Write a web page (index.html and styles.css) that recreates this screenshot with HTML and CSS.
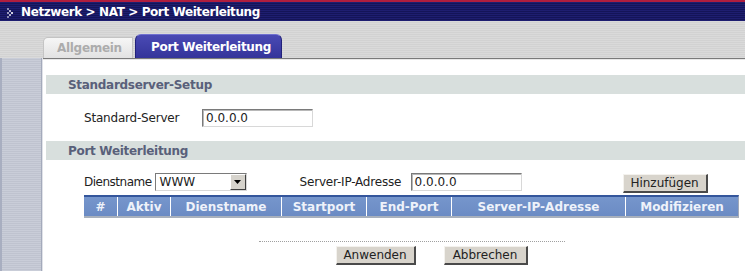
FILE: index.html
```html
<!DOCTYPE html>
<html lang="de">
<head>
<meta charset="utf-8">
<title>Port Weiterleitung</title>
<link rel="stylesheet" href="styles.css">
</head>
<body>
<div class="topbar">
  <svg class="crumb-icon" width="8" height="10" viewBox="0 0 8 10">
    <rect x="0" y="0" width="2" height="2" fill="#8a8ab0"/>
    <rect x="2" y="2" width="2" height="2" fill="#b0b0cc"/>
    <rect x="4" y="4" width="2" height="2" fill="#d0d0e0"/>
    <rect x="2" y="6" width="2" height="2" fill="#b0b0cc"/>
    <rect x="0" y="8" width="2" height="2" fill="#8a8ab0"/>
    <rect x="0" y="4" width="2" height="2" fill="#9a9abc"/>
  </svg>
  <span class="crumb">Netzwerk &gt; NAT &gt; Port Weiterleitung</span>
</div>
<div class="page">
  <div class="side">
    <div class="side-top"></div>
    <div class="side-rest"></div>
  </div>
  <div class="main">
    <div class="tabs">
      <div class="tab tab-off">Allgemein</div>
      <div class="tab tab-on">Port Weiterleitung</div>
    </div>
    <div class="content">
      <div class="band">Standardserver-Setup</div>
      <div class="row row-std">
        <span class="label label-std">Standard-Server</span>
        <span class="input input-std">0.0.0.0</span>
      </div>
      <div class="band">Port Weiterleitung</div>
      <div class="row row-pf">
        <span class="label label-dn">Dienstname</span>
        <span class="select"><span class="select-val">WWW</span><span class="select-btn"><svg width="7" height="4" viewBox="0 0 7 4"><path d="M0 0H7L3.5 4Z" fill="#000"/></svg></span></span>
        <span class="label label-ip">Server-IP-Adresse</span>
        <span class="input input-ip">0.0.0.0</span>
        <span class="btn btn-add">Hinzufügen</span>
      </div>
      <div class="table">
        <div class="th c1">#</div>
        <div class="th c2">Aktiv</div>
        <div class="th c3">Dienstname</div>
        <div class="th c4">Startport</div>
        <div class="th c5">End-Port</div>
        <div class="th c6">Server-IP-Adresse</div>
        <div class="th c7">Modifizieren</div>
      </div>
      <div class="footer">
        <div class="divider"></div>
        <div class="actions">
          <span class="btn btn-apply">Anwenden</span>
          <span class="btn btn-cancel">Abbrechen</span>
        </div>
      </div>
    </div>
  </div>
</div>
</body>
</html>
```
FILE: styles.css
```css
html, body {
  margin: 0;
  padding: 0;
  height: 100%;
  background: #fff;
  font-family: "DejaVu Sans", Verdana, sans-serif;
  font-size: 12px;
  color: #222;
  overflow: hidden;
}

.topbar {
  height: 19px;
  border-top: 2px solid #b01e3e;
  background: repeating-linear-gradient(to bottom, #1e1e70 0, #1e1e70 1px, #141458 1px, #141458 2px);
  display: flex;
  align-items: center;
  padding-left: 7px;
}
.crumb-icon {
  width: 8px;
  height: 10px;
  margin-right: 6px;
  margin-top: 2px;
}
.crumb {
  color: #fff;
  font-weight: bold;
  font-size: 12px;
  letter-spacing: -0.4px;
}

.page {
  display: flex;
  height: calc(100% - 21px);
}
.side {
  width: 43px;
  display: flex;
  flex-direction: column;
}
.side-top {
  height: 37px;
  background: repeating-linear-gradient(to bottom, #dadada 0, #dadada 1px, #d2d2d2 1px, #d2d2d2 2px);
}
.side-rest {
  flex: 1;
  border-right: 1px solid #e0e2e8;
  background: repeating-linear-gradient(to bottom, #c9cdd8 0, #c9cdd8 1px, #bfc3cf 1px, #bfc3cf 2px);
  box-shadow: inset 2px 0 0 #a8aec0, inset -1px 0 0 #a4aabb;
}

.main {
  flex: 1;
  display: flex;
  flex-direction: column;
}
.tabs {
  height: 37px;
  display: flex;
  align-items: flex-end;
  gap: 2px;
  background: repeating-linear-gradient(to bottom, #dadada 0, #dadada 1px, #d2d2d2 1px, #d2d2d2 2px);
  border-bottom: 1px solid #7a7a7a;
  box-shadow: 0 1px 0 #e8e8e8;
}
.tab {
  font-weight: bold;
  font-size: 12px;
  letter-spacing: -0.3px;
  display: flex;
  align-items: center;
  box-sizing: border-box;
}
.tab-off {
  width: 90px;
  height: 21px;
  padding-left: 13px;
  color: #acacac;
  background: linear-gradient(to bottom, #f6f6f6, #e2e2e2);
  border: 1px solid #c4c4c4;
  border-bottom: none;
  border-radius: 5px 0 0 0;
}
.tab-on {
  width: 147px;
  height: 24px;
  padding-left: 15px;
  color: #fff;
  background: linear-gradient(to bottom, #4a4ab4, #34349a);
  border: 1px solid #22227a;
  border-top-color: #7070d0;
  border-bottom: none;
  border-radius: 6px 6px 0 0;
}

.content {
  flex: 1;
  padding: 16px 0 0 3px;
  display: flex;
  flex-direction: column;
}
.band {
  height: 19px;
  background: #d8dfdd;
  color: #59607a;
  font-weight: bold;
  font-size: 12px;
  letter-spacing: -0.3px;
  display: flex;
  align-items: center;
  padding-left: 22px;
}
.row {
  display: flex;
  padding-left: 38px;
}
.row-std {
  height: 47px;
  align-items: center;
}
.label {
  white-space: nowrap;
  letter-spacing: -0.2px;
}
.label-std {
  width: 118px;
}
.row-pf {
  height: 22px;
  padding-top: 13px;
  align-items: flex-start;
}
.row-pf .label {
  line-height: 18px;
}
.label-dn {
  letter-spacing: -0.5px;
  margin-right: 3px;
}
.label-ip {
  width: 111px;
  margin-left: 53px;
}
.input {
  box-sizing: border-box;
  height: 18px;
  background: #fff;
  border: 1px solid #d8d8d8;
  border-top-color: #7a7a7a;
  border-left-color: #7a7a7a;
  box-shadow: inset 1px 1px 0 #b8b8b8;
  padding-left: 3px;
  line-height: 16px;
}
.input-std {
  width: 111px;
}
.input-ip {
  width: 111px;
}
.select {
  box-sizing: border-box;
  width: 92px;
  height: 18px;
  display: flex;
  border: 1px solid #7a7a7a;
  border-right-color: #d8d8d8;
  border-bottom-color: #d8d8d8;
  background: #fff;
}
.select-val {
  flex: 1;
  padding-left: 4px;
  line-height: 16px;
}
.select-btn {
  box-sizing: border-box;
  width: 16px;
  height: 16px;
  background: #d6d3cc;
  border: 1px solid #fff;
  border-right-color: #404040;
  border-bottom-color: #404040;
  display: flex;
  align-items: center;
  justify-content: center;
}
.btn {
  box-sizing: border-box;
  display: flex;
  align-items: center;
  justify-content: center;
  background: #d8d4cc;
  border: 1px solid #f4f2ee;
  border-right: 2px solid #4a4a4a;
  border-bottom: 2px solid #4a4a4a;
  color: #222;
  font-size: 12px;
}
.btn-add {
  width: 85px;
  height: 19px;
  margin-left: 101px;
  margin-top: 1px;
}

.table {
  margin-left: 38px;
  width: 655px;
  height: 23px;
  display: flex;
  box-sizing: border-box;
  border-top: 2px solid #34569c;
  border-bottom: 2px solid #a8b0bc;
  border-right: 1px solid #a0a8b8;
  background: #fff;
  gap: 1px;
}
.th {
  box-sizing: border-box;
  background: linear-gradient(to bottom, #7696cc, #6b8bc4);
  color: #eef2fa;
  font-weight: bold;
  font-size: 12px;
  display: flex;
  align-items: center;
  justify-content: center;
}
.c1 { width: 33px; }
.c2 { width: 52px; }
.c3 { width: 110px; }
.c4 { width: 84px; }
.c5 { width: 84px; }
.c6 { width: 173px; }
.c7 { flex: 1; }

.footer {
  margin-left: 38px;
  width: 655px;
  display: flex;
  flex-direction: column;
  align-items: center;
}
.divider {
  width: 306px;
  margin-top: 23px;
  border-top: 1px dotted #a0a0a0;
}
.actions {
  display: flex;
  gap: 28px;
  margin-top: 4px;
  margin-left: 40px;
}
.btn-apply {
  width: 80px;
  height: 19px;
}
.btn-cancel {
  width: 84px;
  height: 19px;
}
```
